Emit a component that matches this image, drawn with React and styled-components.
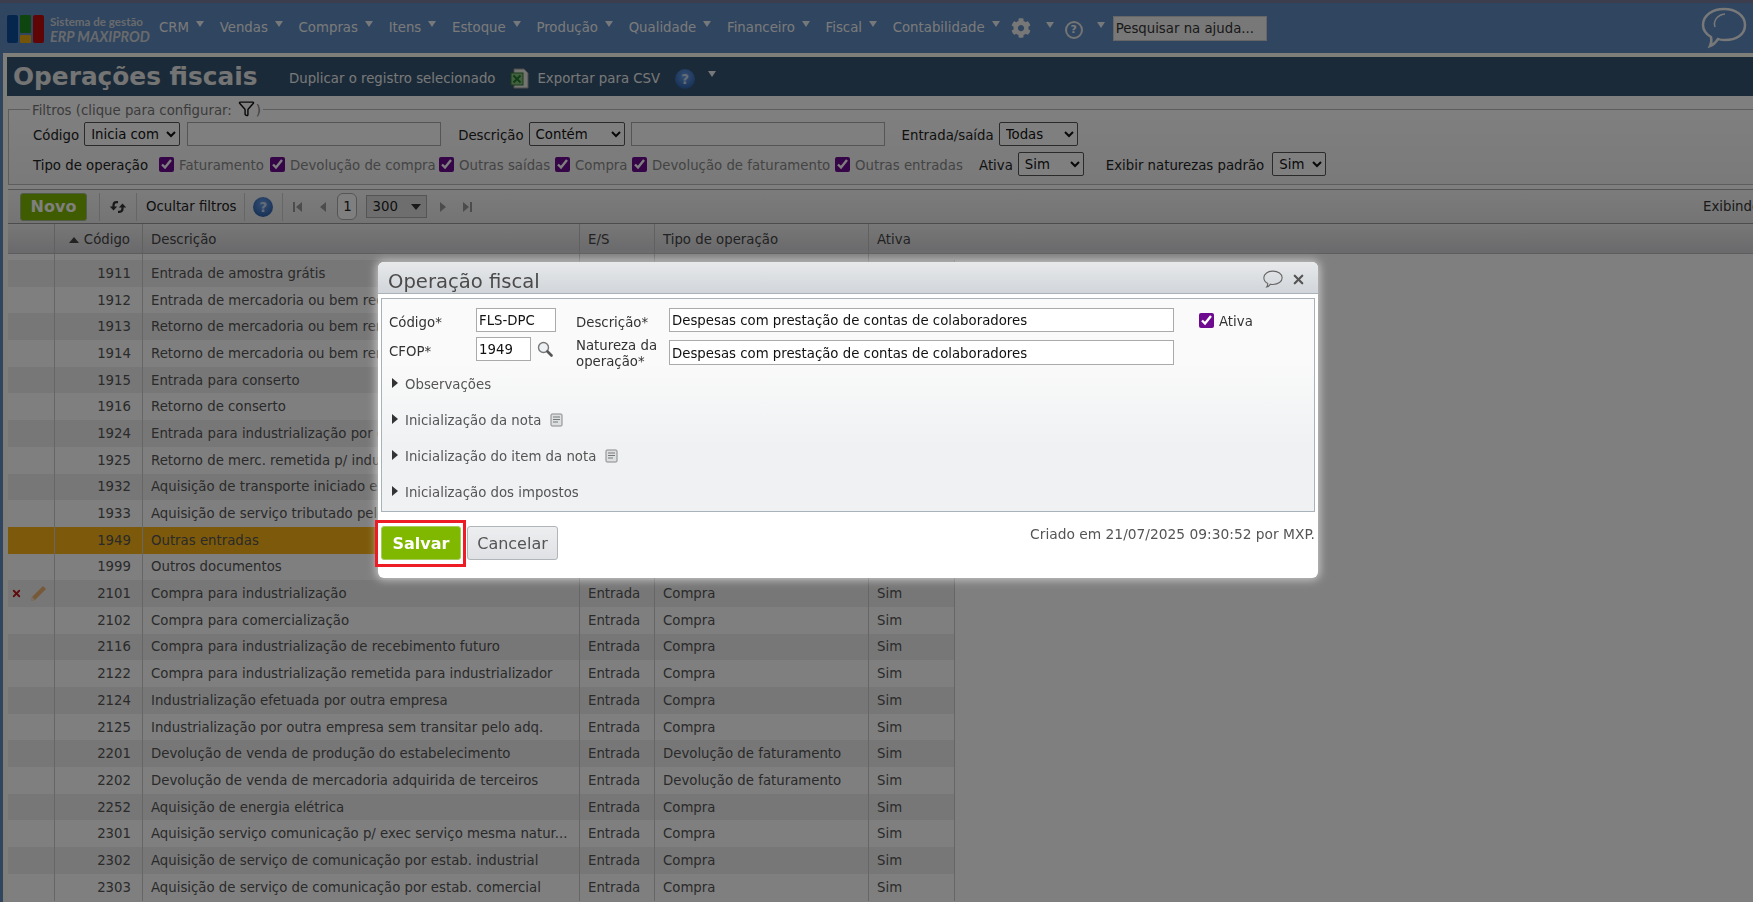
import React from 'react'
import styled, { createGlobalStyle } from 'styled-components'
import { FaCog } from 'react-icons/fa'
import { Filter, X } from 'lucide-react'

const GlobalStyle = createGlobalStyle`
  html, body { margin: 0; height: 100%; overflow: hidden; }
  body { font-family: "DejaVu Sans", Verdana, sans-serif; font-size: 13.3px; color: #333; background: #5e8ac0; }
  * { box-sizing: border-box; }
`

const Shell = styled.div`
  height: 902px;
  overflow: hidden;
  background: #5e8ac0;
  border-top: 3px solid #787c9c;
`

const TopNav = styled.nav`
  display: flex;
  align-items: center;
  height: 50px;
  padding-left: 7px;
  color: #f4f4f4;
`

const Logo = styled.div`
  display: flex;
  align-items: center;
  gap: 5px;
  width: 152px;
  flex: none;
  margin-top: 2px;
`

const LogoText = styled.div`
  font-family: Lato, sans-serif;
  color: #d0d5da;
  line-height: 15px;
  white-space: nowrap;
  & > b { display: block; font-size: 11.6px; }
  & > i { display: block; font-size: 14.3px; font-weight: 700; }
`

const NavItem = styled.a`
  display: flex;
  align-items: center;
  margin-right: ${p => p.$after || 15.700}px;
  padding-bottom: 2px;
  white-space: nowrap;
`

const Caret = styled.span`
  width: 0;
  height: 0;
  margin-left: ${p => p.$ml ?? 7}px;
  margin-bottom: 6px;
  border-left: 4.5px solid transparent;
  border-right: 4.5px solid transparent;
  border-top: 6px solid ${p => p.$color || '#eef1f4'};
`

const HelpRing = styled.span`
  display: flex;
  align-items: center;
  justify-content: center;
  width: 18px;
  height: 18px;
  margin: 3px 0 0 ${p => p.$ml || 0}px;
  border: 2px solid #e8e8e8;
  border-radius: 50%;
  font-size: 11px;
  font-weight: 700;
`

const HelpSearch = styled.input`
  width: 154px;
  height: 25px;
  margin-left: 8px;
  padding: 0 2px;
  border: 1px solid #ccc;
  background: #f0f0f0;
  color: #444;
  font: 13.3px "DejaVu Sans", sans-serif;
  &::placeholder { color: #333; opacity: 1; }
`

const ChatBubble = styled.svg`
  margin-left: auto;
  margin-right: 6px;
  flex: none;
`

const Content = styled.main`
  height: 849px;
  margin-left: 3px;
  overflow: hidden;
  background: #fff;
  border-top: 4px solid #fffff4;
  border-left: 4px solid #fffff4;
`

const TitleBar = styled.header`
  display: flex;
  align-items: center;
  height: 39px;
  padding-left: 6px;
  background: #345470;
  color: #f0f0f0;
`

const PageTitle = styled.h1`
  width: 276px;
  margin: 0;
  flex: none;
  font-size: 24.8px;
  font-weight: 700;
  color: #e8e8e8;
  white-space: nowrap;
`

const TitleAction = styled.a`
  display: flex;
  align-items: center;
  gap: 7px;
  margin: 3px ${p => p.$mr || 0}px 0 0;
  white-space: nowrap;
`

const HelpDot = styled.span`
  display: flex;
  align-items: center;
  justify-content: center;
  width: 20px;
  height: 20px;
  margin-top: ${p => p.$mt || 0}px;
  flex: none;
  border-radius: 50%;
  background: radial-gradient(circle at 50% 35%, #6aa0e8, #1f4f9c);
  color: #c8d8f0;
  font-size: 13.5px;
  font-weight: 700;
`

const FilterBox = styled.fieldset`
  height: 84px;
  margin: 5px 0 0 1px;
  padding: 5px 0 0 24px;
  border: 1px solid #bbb;
  border-right: 0;
  background: linear-gradient(#fff, #f4f4f4);
`

const FilterLegend = styled.legend`
  display: flex;
  align-items: center;
  height: 16px;
  margin-left: -3px;
  padding: 2px 2px 0;
  color: #777;
  & > svg { margin: -4px 1px 0 6px; }
`

const FilterRow = styled.div`
  display: flex;
  align-items: center;
  height: 24px;
  margin-bottom: ${p => p.$mb || 0}px;
  white-space: nowrap;
`

const FieldLabel = styled.label`
  margin-left: ${p => p.$ml || 0}px;
  margin-right: ${p => p.$mr || 5}px;
  padding-top: 2px;
  color: #222;
`

const Select = styled.select`
  width: ${p => p.$w}px;
  height: 24px;
  margin-right: ${p => p.$mr || 0}px;
  padding: 0 0 0 2px;
  border: 1px solid #555;
  border-radius: 2px;
  background: #fff;
  color: #111;
  font: 13.3px "DejaVu Sans", sans-serif;
`

const TextInput = styled.input`
  width: ${p => p.$w}px;
  height: 24px;
  padding: 0 2px;
  border: 1px solid #aaa;
  background: #fff;
  color: #111;
  font: 13.3px "DejaVu Sans", sans-serif;
`

const CheckItem = styled.label`
  display: flex;
  align-items: center;
  width: ${p => p.$w}px;
  padding-top: 2px;
  flex: none;
  color: #888;
`

const Check = styled.input`
  width: 15px;
  height: 15px;
  margin: -2px 5px 0 0;
  flex: none;
  accent-color: #6d0a8f;
`

const Toolbar = styled.div`
  display: flex;
  align-items: center;
  height: 34px;
  margin: 4px 0 0 1px;
  padding-left: 12px;
  border-top: 1px solid #aaa;
  background: linear-gradient(#f8f8f8, #e8e8e8);
`

const NewButton = styled.button`
  width: 67px;
  height: 28px;
  margin-right: 12px;
  border: 1px solid #a0b890;
  border-radius: 3px;
  background: #80b800;
  color: #fff;
  font: 700 16px "DejaVu Sans", sans-serif;
`

const ToolCell = styled.div`
  display: flex;
  align-items: center;
  justify-content: center;
  height: 28px;
  padding: ${p => p.$pad || '0 9px 0 8px'};
  border-left: 1px solid #ccc;
  color: #222;
  white-space: nowrap;
`

const PagerArrow = styled.svg`
  margin-right: ${p => p.$mr || 0}px;
  flex: none;
`

const PageNumber = styled.span`
  display: flex;
  align-items: center;
  justify-content: center;
  width: 20px;
  height: 27px;
  margin-right: 9px;
  border: 1px solid #aaa;
  border-radius: 6px;
  background: #fff;
`

const PageSize = styled.div`
  display: flex;
  align-items: center;
  justify-content: space-between;
  width: 61px;
  height: 23px;
  margin-right: 12px;
  padding: 0 5px;
  border: 1px solid #aaa;
  background: #dcdcdc;
  & > i { width: 0; height: 0; border: 5px solid transparent; border-top: 6px solid #333; margin-top: 5px; }
`

const ShowingText = styled.span`
  margin-left: auto;
  width: 50px;
  overflow: hidden;
  white-space: nowrap;
  color: #333;
`

const HeadRow = styled.div`
  display: grid;
  grid-template-columns: 47px 88px 437px 75px 214px 1fr;
  height: 31px;
  margin-left: 1px;
  border-top: 1px solid #999;
  border-bottom: 1px solid #bbb;
  background: linear-gradient(#f0f0f0, #d4d4d8);
`

const HeadCell = styled.div`
  display: flex;
  align-items: center;
  justify-content: ${p => (p.$right ? 'flex-end' : 'flex-start')};
  gap: 5px;
  padding: 2px ${p => (p.$right ? 12 : 8)}px 0 8px;
  border-right: ${p => (p.$last ? '0' : '1px solid #c0c0c0')};
  color: #444;
`

const SortMark = styled.span`
  width: 0;
  height: 0;
  border-left: 5px solid transparent;
  border-right: 5px solid transparent;
  border-bottom: 6px solid #444;
`

const RowGap = styled.div`
  display: grid;
  grid-template-columns: 47px 88px 437px 75px 214px;
  width: 862px;
  height: 6px;
  margin-left: 1px;
  & > span { border-right: 1px solid #ccc; }
`

const Row = styled.div`
  display: grid;
  grid-template-columns: 47px 88px 437px 75px 214px 86px;
  width: 947px;
  height: 26.7px;
  margin-left: 1px;
  background: ${p => (p.$selected ? '#fab416' : p.$odd ? '#efefef' : '#fff')};
  color: #555;
`

const Cell = styled.div`
  display: flex;
  align-items: center;
  justify-content: ${p => (p.$right ? 'flex-end' : 'flex-start')};
  gap: 8px;
  padding: ${p => p.$pad || '0 8px'};
  border-right: 1px solid ${p => (p.$line ? '#ccc' : 'transparent')};
  white-space: nowrap;
  overflow: hidden;
`

const Backdrop = styled.div`
  position: fixed;
  inset: 0;
  background: rgba(0, 0, 0, 0.5);
`

const Modal = styled.section`
  position: fixed;
  left: 378px;
  top: 262px;
  width: 940px;
  height: 316px;
  padding: 0 3px;
  border-radius: 6px;
  background: #fff;
  box-shadow: 0 0 9px 2px rgba(255, 255, 255, 0.55);
`

const ModalHead = styled.div`
  display: flex;
  align-items: center;
  height: 32px;
  margin: 0 -3px;
  padding: 3px 12px 0 10px;
  border-radius: 6px 6px 0 0;
  border-bottom: 1px solid #a9b1b9;
  background: linear-gradient(#e7e9eb, #d1d5d9);
`

const ModalTitle = styled.h2`
  margin: 4px 0 0;
  font-size: 19.6px;
  font-weight: 400;
  color: #4b4b4b;
`

const ModalTools = styled.div`
  display: flex;
  align-items: center;
  gap: 8px;
  margin-left: auto;
  color: #555;
`

const ModalBody = styled.div`
  height: 214px;
  margin-top: 4px;
  padding: 9px 7px 0;
  border: 1px solid #a9b1b9;
  background: linear-gradient(#f9faf9 30%, #f0f1f3 70%);
`

const FormGrid = styled.div`
  display: grid;
  grid-template-columns: 87px 100px 93px 505px auto;
  grid-template-rows: 29px 29px;
  align-items: start;
`

const FormLabel = styled.label`
  padding-top: ${p => p.$top ?? 7}px;
  line-height: 15.5px;
  color: #333;
`

const InlineField = styled.div`
  display: flex;
  align-items: center;
  gap: 6px;
`

const FormInput = styled.input`
  display: block;
  width: ${p => p.$w}px;
  height: ${p => p.$h || 24}px;
  margin-top: ${p => p.$mt || 0}px;
  padding: 1px 2px 0;
  border: 1px solid #aaa;
  background: #fff;
  color: #111;
  font: 13.3px "DejaVu Sans", sans-serif;
`

const ActiveField = styled.label`
  display: flex;
  align-items: center;
  margin: 4px 0 0 25px;
  padding-top: 2px;
  color: #333;
`

const Section = styled.div`
  display: flex;
  align-items: center;
  height: 36px;
  padding-left: 3px;
  color: #555;
`

const Triangle = styled.span`
  width: 0;
  height: 0;
  margin: -2px 7px 0 0;
  border-top: 5px solid transparent;
  border-bottom: 5px solid transparent;
  border-left: 6px solid #333;
`

const ModalFoot = styled.div`
  display: flex;
  align-items: flex-start;
  justify-content: space-between;
  padding-top: 14px;
`

const SaveFrame = styled.div`
  display: flex;
  gap: 6px;
  position: relative;
  &::before {
    content: '';
    position: absolute;
    left: -6px;
    top: -6px;
    width: 91px;
    height: 47px;
    box-sizing: border-box;
    border: 3px solid #ee1c25;
  }
`

const SaveButton = styled.button`
  width: 80px;
  height: 34px;
  padding-top: 2px;
  border: 1px solid #a8cc60;
  border-radius: 3px;
  background: #80b800;
  color: #fff;
  font: 700 16px "DejaVu Sans", sans-serif;
`

const CancelButton = styled.button`
  width: 91px;
  height: 34px;
  padding-top: 2px;
  border: 1px solid #b0b5ba;
  border-radius: 3px;
  background: linear-gradient(#eceef0, #dfe1e4);
  color: #555;
  font: 16px "DejaVu Sans", sans-serif;
`

const CreatedAt = styled.span`
  font-size: 13.8px;
  color: #555;
`

const LogoMark = () => (
  <svg width="38" height="29" viewBox="0 0 38 29">
    <rect x="0" y="0" width="11" height="28" rx="2" fill="#0d4d9a" />
    <rect x="13" y="0" width="11" height="18" rx="1" fill="#1f8a1f" />
    <rect x="13" y="20" width="11" height="8" rx="1" fill="#e8a810" />
    <rect x="26" y="0" width="11" height="28" rx="2" fill="#c00a0a" />
  </svg>
)

const PagerIcon = ({ dir, bar, mr }) => (
  <PagerArrow width="10" height="12" viewBox="0 0 10 12" $mr={mr}>
    {bar && <rect x={dir === 'left' ? 0 : 8} y="1" width="2" height="10" fill="#999" />}
    <path d={dir === 'left' ? 'M9 1 3 6l6 5z' : 'M1 1l6 5-6 5z'} fill="#999" />
  </PagerArrow>
)

const RefreshIcon = () => (
  <svg width="18" height="16" viewBox="0 0 18 16" fill="none" stroke="#333" strokeWidth="2.2">
    <path d="M9 3.200H7.500C5.500 3.200 4.500 4.500 4.500 6.500V8" />
    <path d="M0.800 7.500H8.200L4.500 11.500z" fill="#333" stroke="none" />
    <path d="M9 12.800h1.500c2 0 3-1.300 3-3.300V8" />
    <path d="M9.800 8.500H17.200L13.500 4.500z" fill="#333" stroke="none" />
  </svg>
)

const ExcelIcon = () => (
  <svg width="20" height="21" viewBox="0 0 20 21">
    <path d="M4 1h10l4 4v15H4z" fill="#e8e8e0" stroke="#999" />
    <rect x="1" y="5" width="12" height="12" fill="#8ac080" stroke="#2e7b3a" />
    <path d="M3.500 7.500l7 7M10.500 7.500l-7 7" stroke="#1f7a2a" strokeWidth="2" />
  </svg>
)

const NoteIcon = () => (
  <svg width="13" height="14" viewBox="0 0 13 14" style={{ marginLeft: 9 }}>
    <rect x="1" y="1" width="11" height="12" rx="1" fill="#dde0e2" stroke="#888" />
    <path d="M3 4h7M3 6.500h7M3 9h5" stroke="#777" />
  </svg>
)

const LensIcon = () => (
  <svg width="16" height="16" viewBox="0 0 16 16">
    <circle cx="6.500" cy="6.500" r="5" fill="#eef1f3" stroke="#777" strokeWidth="1.400" />
    <path d="M10.500 10.500 14.500 14.500" stroke="#555" strokeWidth="2.600" strokeLinecap="round" />
  </svg>
)

const CommentIcon = ({ size, color, width }) => (
  <svg width={size} height={size} viewBox="0 0 24 24" fill="none" stroke={color} strokeWidth={width}>
    <path d="M12 2.500c6 0 11 3.300 11 8s-5 8-11 8c-1 0-2-.1-3-.3-1 1.500-2.500 3-4.500 3.300.8-1 1.200-2.300 1.200-4.200C2.800 15.800 1 13.300 1 10.500c0-4.700 5-8 11-8z" />
  </svg>
)

const menu = ['CRM', 'Vendas', 'Compras', 'Itens', 'Estoque', 'Produção', 'Qualidade', 'Financeiro', 'Fiscal', 'Contabilidade']

const operations = [
  ['1911', 'Entrada de amostra grátis'],
  ['1912', 'Entrada de mercadoria ou bem recebido'],
  ['1913', 'Retorno de mercadoria ou bem remetido'],
  ['1914', 'Retorno de mercadoria ou bem remetido'],
  ['1915', 'Entrada para conserto'],
  ['1916', 'Retorno de conserto'],
  ['1924', 'Entrada para industrialização por encomenda'],
  ['1925', 'Retorno de merc. remetida p/ industrialização'],
  ['1932', 'Aquisição de transporte iniciado em outro estado'],
  ['1933', 'Aquisição de serviço tributado pelo ISSQN'],
  ['1949', 'Outras entradas'],
  ['1999', 'Outros documentos'],
  ['2101', 'Compra para industrialização', 'Entrada', 'Compra', 'Sim'],
  ['2102', 'Compra para comercialização', 'Entrada', 'Compra', 'Sim'],
  ['2116', 'Compra para industrialização de recebimento futuro', 'Entrada', 'Compra', 'Sim'],
  ['2122', 'Compra para industrialização remetida para industrializador', 'Entrada', 'Compra', 'Sim'],
  ['2124', 'Industrialização efetuada por outra empresa', 'Entrada', 'Compra', 'Sim'],
  ['2125', 'Industrialização por outra empresa sem transitar pelo adq.', 'Entrada', 'Compra', 'Sim'],
  ['2201', 'Devolução de venda de produção do estabelecimento', 'Entrada', 'Devolução de faturamento', 'Sim'],
  ['2202', 'Devolução de venda de mercadoria adquirida de terceiros', 'Entrada', 'Devolução de faturamento', 'Sim'],
  ['2252', 'Aquisição de energia elétrica', 'Entrada', 'Compra', 'Sim'],
  ['2301', 'Aquisição serviço comunicação p/ exec serviço mesma natur...', 'Entrada', 'Compra', 'Sim'],
  ['2302', 'Aquisição de serviço de comunicação por estab. industrial', 'Entrada', 'Compra', 'Sim'],
  ['2303', 'Aquisição de serviço de comunicação por estab. comercial', 'Entrada', 'Compra', 'Sim'],
]

const filterChecks = [
  ['Faturamento', 111],
  ['Devolução de compra', 169],
  ['Outras saídas', 116],
  ['Compra', 77],
  ['Devolução de faturamento', 203],
  ['Outras entradas', 144],
]

const App = () => (
  <>
    <GlobalStyle />
    <Shell>
      <TopNav>
        <Logo>
          <LogoMark />
          <LogoText>
            <b>Sistema de gestão</b>
            <i>ERP MAXIPROD</i>
          </LogoText>
        </Logo>
        {menu.map(item => (
          <NavItem key={item} $after={item === 'Contabilidade' ? 11 : 15.700}>
            {item}
            <Caret />
          </NavItem>
        ))}
        <FaCog size={20} color="#eee" />
        <Caret $ml={15} />
        <HelpRing $ml={11}>?</HelpRing>
        <Caret $ml={14} />
        <HelpSearch placeholder="Pesquisar na ajuda..." />
        <ChatBubble width="46" height="42" viewBox="0 0 46 42" fill="none" stroke="#f0f0f0" strokeWidth="2.500">
          <path d="M23 2c11 0 21 6 21 16s-9 15-20 15c-3 0-5 0-7-1-2 3-5 6-8 7 1-2 2-5 1-9C5 27 2 23 2 18 2 8 12 2 23 2z" />
          <path d="M14 20c-2-6 2-12 10-13" strokeWidth="1.500" />
        </ChatBubble>
      </TopNav>
      <Content>
        <TitleBar>
          <PageTitle>Operações fiscais</PageTitle>
          <TitleAction $mr={15}>Duplicar o registro selecionado</TitleAction>
          <TitleAction $mr={15}><ExcelIcon />Exportar para CSV</TitleAction>
          <HelpDot $mt={4}>?</HelpDot>
          <Caret $ml={13} />
        </TitleBar>

        <FilterBox>
          <FilterLegend>Filtros (clique para configurar:<Filter size={17} color="#111" />)</FilterLegend>
          <FilterRow $mb={6}>
            <FieldLabel>Código</FieldLabel>
            <Select $w={96} $mr={7} defaultValue="Inicia com"><option>Inicia com</option></Select>
            <TextInput $w={254} />
            <FieldLabel $ml={17}>Descrição</FieldLabel>
            <Select $w={96} $mr={6} defaultValue="Contém"><option>Contém</option></Select>
            <TextInput $w={254} />
            <FieldLabel $ml={17}>Entrada/saída</FieldLabel>
            <Select $w={79} defaultValue="Todas"><option>Todas</option></Select>
          </FilterRow>
          <FilterRow>
            <FieldLabel $mr={11}>Tipo de operação</FieldLabel>
            {filterChecks.map(([label, w]) => (
              <CheckItem key={label} $w={w}>
                <Check type="checkbox" defaultChecked />
                {label}
              </CheckItem>
            ))}
            <FieldLabel>Ativa</FieldLabel>
            <Select $w={66} $mr={22} defaultValue="Sim"><option>Sim</option></Select>
            <FieldLabel $mr={8}>Exibir naturezas padrão</FieldLabel>
            <Select $w={54} defaultValue="Sim"><option>Sim</option></Select>
          </FilterRow>
        </FilterBox>

        <Toolbar>
          <NewButton>Novo</NewButton>
          <ToolCell $pad="0 9px"><RefreshIcon /></ToolCell>
          <ToolCell $pad="0 8px 0 9px">Ocultar filtros</ToolCell>
          <ToolCell><HelpDot>?</HelpDot></ToolCell>
          <ToolCell $pad="0 0 0 10px">
            <PagerIcon dir="left" bar mr={14} />
            <PagerIcon dir="left" mr={10} />
            <PageNumber>1</PageNumber>
            <PageSize>300<i /></PageSize>
            <PagerIcon dir="right" mr={13} />
            <PagerIcon dir="right" bar />
          </ToolCell>
          <ShowingText>Exibindo</ShowingText>
        </Toolbar>

        <HeadRow>
          <HeadCell />
          <HeadCell $right><SortMark />Código</HeadCell>
          <HeadCell>Descrição</HeadCell>
          <HeadCell>E/S</HeadCell>
          <HeadCell>Tipo de operação</HeadCell>
          <HeadCell $last>Ativa</HeadCell>
        </HeadRow>
        <RowGap><span /><span /><span /><span /><span /></RowGap>

        {operations.map(([code, desc, io, type, active], i) => (
          <Row key={code} $odd={i % 2 === 0} $selected={code === '1949'}>
            <Cell $line $pad="0 0 0 3px">
              {code === '2101' && (
                <>
                  <X size={11} color="#c01818" strokeWidth={4} />
                  <svg width="18" height="18" viewBox="0 0 18 18" style={{ marginLeft: -1 }}>
                    <path d="M14 1l3 3L6 15l-4 1 1-4z" fill="#eeb070" />
                    <path d="M3 12l3 3-4 1z" fill="#f4e0c4" />
                  </svg>
                </>
              )}
            </Cell>
            <Cell $line $right $pad="0 11px 0 0">{code}</Cell>
            <Cell $line>{desc}</Cell>
            <Cell $line>{io}</Cell>
            <Cell $line>{type}</Cell>
            <Cell $line>{active}</Cell>
          </Row>
        ))}
      </Content>
    </Shell>
    <Backdrop />
    <Modal>
      <ModalHead>
        <ModalTitle>Operação fiscal</ModalTitle>
        <ModalTools>
          <CommentIcon size={20} color="#666" width={1.3} />
          <X size={15} color="#555" strokeWidth={3.5} />
        </ModalTools>
      </ModalHead>
      <ModalBody>
        <FormGrid>
          <FormLabel>Código*</FormLabel>
          <FormInput $w={80} defaultValue="FLS-DPC" />
          <FormLabel>Descrição*</FormLabel>
          <FormInput $w={505} defaultValue="Despesas com prestação de contas de colaboradores" />
          <ActiveField><Check type="checkbox" defaultChecked />Ativa</ActiveField>
          <FormLabel $top={7}>CFOP*</FormLabel>
          <InlineField>
            <FormInput $w={55} defaultValue="1949" />
            <LensIcon />
          </InlineField>
          <FormLabel $top={1}>Natureza da<br />operação*</FormLabel>
          <FormInput $w={505} $h={25} $mt={3} defaultValue="Despesas com prestação de contas de colaboradores" />
        </FormGrid>
        <div>
          <Section><Triangle />Observações</Section>
          <Section><Triangle />Inicialização da nota<NoteIcon /></Section>
          <Section><Triangle />Inicialização do item da nota<NoteIcon /></Section>
          <Section><Triangle />Inicialização dos impostos</Section>
        </div>
      </ModalBody>
      <ModalFoot>
        <SaveFrame>
          <SaveButton>Salvar</SaveButton>
          <CancelButton>Cancelar</CancelButton>
        </SaveFrame>
        <CreatedAt>Criado em 21/07/2025 09:30:52 por MXP.</CreatedAt>
      </ModalFoot>
    </Modal>
  </>
)

export default App
